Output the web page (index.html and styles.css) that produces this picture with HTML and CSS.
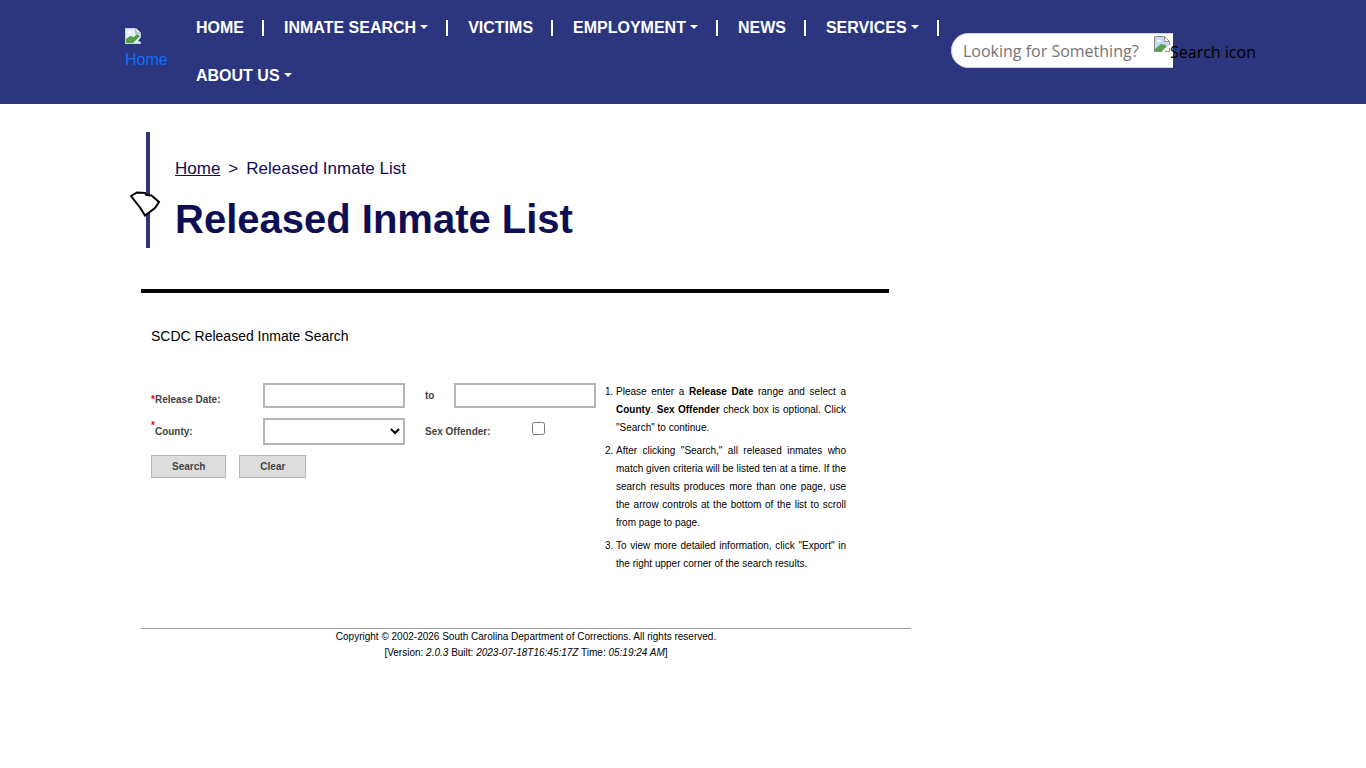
FILE: index.html
```html
<!DOCTYPE html>
<html lang="en">
<head>
    <meta charset="UTF-8">
    <meta name="viewport" content="width=device-width, initial-scale=1.0">
    <title>Released Inmate List</title>
    <link rel="stylesheet" href="styles.css">
</head>
<body>
    <header class="site-header">
        <div class="header-inner">
            <a href="#" class="logo">
                <svg class="missing-icon" width="16" height="16" viewBox="0 0 16 16" aria-hidden="true">
                    <path d="M0 0h11l5 5v11H0z" fill="#c2cfe4"/>
                    <path d="M1 1h9v5h5v9H1z" fill="#e4edf9"/>
                    <path d="M1 15v-4l4-3 4 1 3-3 3 2-7 7z" fill="#56a046"/>
                    <path d="M11 0v5h5z" fill="#fff" stroke="#9aa3b5"/>
                    <path d="M16 9v5l-3-1z" fill="#2b367f"/>
                    <path d="M3 5c0-2 3-2 3 0z" fill="#fff"/>
                </svg>
                <span>Home</span>
            </a>
            <nav class="main-nav">
                <ul>
                    <li><a href="#">HOME</a></li>
                    <li><a href="#" class="dropdown">INMATE SEARCH</a></li>
                    <li><a href="#">VICTIMS</a></li>
                    <li><a href="#" class="dropdown">EMPLOYMENT</a></li>
                    <li><a href="#">NEWS</a></li>
                    <li><a href="#" class="dropdown">SERVICES</a></li>
                    <li><a href="#" class="dropdown">ABOUT US</a></li>
                </ul>
            </nav>
            <form class="site-search">
                <input type="text" placeholder="Looking for Something?" aria-label="Looking for Something?">
                <button type="button" class="search-button">
                    <svg class="missing-icon" width="16" height="16" viewBox="0 0 16 16" aria-hidden="true">
                        <path d="M1 1h9v5h5v3l-7 6H1z" fill="#c5d8f5"/>
                        <path d="M3 6c0-3 4-3 4 0z" fill="#fff"/>
                        <path d="M1 15v-2l6-5 4 1 2 1-5 5z" fill="#56a046"/>
                        <path d="M.5 16V.5h10l5 5V9M0 15.5h8M10.5 .5v5h5M11 15.5h4.5V12" fill="none" stroke="#8f8f8f"/>
                    </svg><span>Search icon</span>
                </button>
            </form>
        </div>
    </header>

    <main class="page">
        <div class="title-block">
            <svg class="state-icon" width="32" height="27" viewBox="0 0 32 27" aria-hidden="true">
                <path d="M2 6 8 2.500l8 .5 1.500 2 5 .5 7.500 6.500-4 6-10 7.500-5-8z" fill="#fff" stroke="#000" stroke-width="2"/>
            </svg>
            <div class="breadcrumb">
                <a href="#">Home</a>
                <span>&gt;</span>
                <span>Released Inmate List</span>
            </div>
            <h1>Released Inmate List</h1>
        </div>

        <hr class="divider">

        <section class="search-section">
            <h2>SCDC Released Inmate Search</h2>
            <div class="search-content">
                <form class="inmate-form">
                    <div class="form-row">
                        <label for="dateFrom" class="label-col label-low"><span class="required">*</span>Release Date:</label>
                        <input type="text" id="dateFrom" class="field">
                        <label for="dateTo" class="label-to">to</label>
                        <input type="text" id="dateTo" class="field">
                    </div>
                    <div class="form-row">
                        <label for="county" class="label-col"><sup class="required">*</sup>County:</label>
                        <select id="county" class="field">
                            <option></option>
                        </select>
                        <label for="sexOffender" class="label-offender">Sex Offender:</label>
                        <input type="checkbox" id="sexOffender">
                    </div>
                    <div class="form-buttons">
                        <button type="button">Search</button>
                        <button type="button">Clear</button>
                    </div>
                </form>
                <ol class="instructions">
                    <li>Please enter a <b>Release Date</b> range and select a <b>County</b>. <b>Sex Offender</b> check box is optional. Click "Search" to continue.</li>
                    <li>After clicking "Search," all released inmates who match given criteria will be listed ten at a time. If the search results produces more than one page, use the arrow controls at the bottom of the list to scroll from page to page.</li>
                    <li>To view more detailed information, click "Export" in the right upper corner of the search results.</li>
                </ol>
            </div>
        </section>

        <footer class="page-footer">
            <div>Copyright © 2002-2026 South Carolina Department of Corrections. All rights reserved.</div>
            <div>[Version: <i>2.0.3</i> Built: <i>2023-07-18T16:45:17Z</i> Time: <i>05:19:24 AM</i>]</div>
        </footer>
    </main>
</body>
</html>
```
FILE: styles.css
```css
* {
    box-sizing: border-box;
}

body {
    margin: 0;
    font-family: "Liberation Sans", Arial, sans-serif;
    font-size: 16px;
    color: #000;
    background-color: #fff;
}

/* Header */
.site-header {
    background-color: #2b367f;
}

.header-inner {
    display: flex;
    align-items: flex-start;
    max-width: 1140px;
    margin: 0 auto;
    padding: 4px 12px;
}

.logo {
    width: 43px;
    margin-top: 24px;
    margin-right: 28px;
    color: #0d6efd;
    line-height: 24px;
    text-decoration: none;
}

.missing-icon {
    display: block;
    flex: none;
}

.logo span {
    display: block;
    margin-top: 4px;
}

.main-nav {
    flex: 1;
}

.main-nav ul {
    display: flex;
    flex-wrap: wrap;
    margin: 0;
    padding: 0;
    list-style: none;
}

.main-nav li {
    display: flex;
    align-items: center;
    height: 48px;
    padding-right: 20px;
}

.main-nav li:not(:last-child)::after {
    content: "";
    width: 2px;
    height: 16px;
    margin-left: 18px;
    background-color: #fff;
}

.main-nav li:nth-last-child(2) {
    padding-right: 0;
}

.main-nav a {
    color: #fff;
    font-weight: bold;
    text-decoration: none;
}

.dropdown::after {
    content: "";
    display: inline-block;
    margin-left: 4px;
    vertical-align: 4px;
    border-top: 4px solid #fff;
    border-left: 4px solid transparent;
    border-right: 4px solid transparent;
}

.site-search {
    display: flex;
    position: relative;
    width: 222px;
    margin-top: 29px;
    margin-left: 12px;
    margin-right: 68px;
}

.site-search input,
.search-button {
    font-family: "Segoe UI", "Open Sans", "Noto Sans", sans-serif;
    font-size: 16px;
}

.site-search input {
    width: 100%;
    height: 35px;
    padding: 0 11px;
    border: 1px solid #ced4da;
    border-right: 0;
    border-radius: 18px 0 0 18px;
    background-color: #fff;
}

.site-search input::placeholder {
    color: #757575;
}

/* sits over the right end of the search box */
.search-button {
    display: flex;
    position: absolute;
    top: 3px;
    left: 203px;
    padding: 0;
    border: 0;
    background: none;
    color: #000;
    line-height: 32px;
    white-space: nowrap;
}

/* Page */
.page {
    max-width: 1084px;
    margin: 0 auto;
    padding-top: 28px;
}

.title-block {
    position: relative;
    margin-left: 5px;
    padding: 27px 0 5px 25px;
    border-left: 4px solid #2b367f;
    color: #0e0e55;
}

.state-icon {
    position: absolute;
    top: 58px;
    left: -21px;
}

.breadcrumb {
    display: flex;
    gap: 8px;
    font-size: 17px;
    line-height: 20px;
}

.breadcrumb a {
    color: #0e0e55;
}

h1 {
    margin: 16px 0 0;
    font-size: 40px;
    line-height: 48px;
}

.divider {
    max-width: 748px;
    height: 4px;
    margin: 41px 0 0;
    border: 0;
    background-color: #000;
}

.search-section {
    max-width: 748px;
    padding: 33px 10px 0;
}

h2 {
    margin: 0;
    font-size: 14px;
    font-weight: normal;
    line-height: 20px;
}

.search-content {
    display: flex;
    margin-top: 37px;
    font-size: 10px;
}

.inmate-form {
    flex: none;
    color: #444;
    font-weight: bold;
}

.form-row {
    display: flex;
    align-items: center;
    margin-bottom: 10px;
}

.label-col {
    width: 112px;
}

.label-low {
    padding-top: 8px;
}

.required {
    color: #f00;
}

sup {
    font-size: 10px;
    line-height: 0;
    vertical-align: 6px;
}

.field {
    width: 142px;
    height: 25px;
    border: 2px solid #b5b5b5;
    background-color: #fff;
}

select.field {
    height: 27px;
}

.label-to {
    width: 49px;
    padding-left: 20px;
}

.label-offender {
    width: 127px;
    padding-left: 20px;
}

.form-row input[type="checkbox"] {
    width: 13px;
    height: 13px;
    margin: 0 0 6px;
}

.form-buttons {
    display: flex;
    gap: 13px;
}

.form-buttons button {
    height: 23px;
    padding: 0 20px;
    border: 1px solid #b5b5b5;
    background-color: #ddd;
    color: #444;
    font-family: inherit;
    font-size: 10px;
    font-weight: bold;
}

.instructions {
    max-width: 250px;
    margin: 0;
    padding-left: 20px;
    line-height: 18px;
    text-align: justify;
}

.instructions li {
    margin-bottom: 5px;
}

.page-footer {
    max-width: 770px;
    margin-top: 50px;
    border-top: 1px solid #999;
    font-size: 10px;
    line-height: 16px;
    text-align: center;
}
```
